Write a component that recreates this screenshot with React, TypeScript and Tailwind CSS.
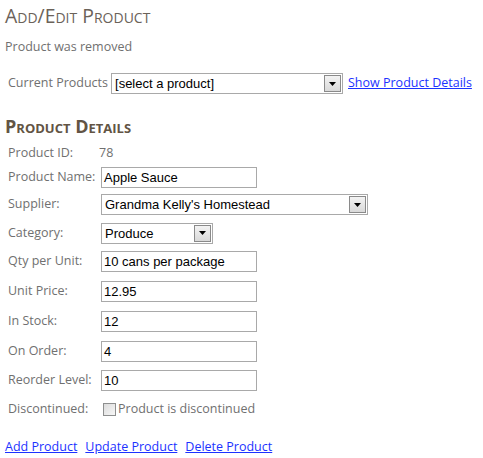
import React from 'react'

const label = 'text-[12.5px] text-[#707070] font-["Open_Sans",sans-serif]'
const field =
  'h-[21px] border border-[#a9a9a9] bg-white px-[2px] text-[13px] leading-[19px] text-[#000] font-["Liberation_Sans",Arial,sans-serif] flex items-center'

function DropArrow() {
  return (
    <div className="ml-auto flex h-[17px] w-[17px] items-center justify-center border border-[#8a8a8a] bg-gradient-to-b from-[#f3f3f3] to-[#d9d9d9]">
      <svg width="7" height="4" viewBox="0 0 7 4">
        <path d="M0 0h7L3.5 4z" fill="#000" />
      </svg>
    </div>
  )
}

function FakeSelect({ value, width }: { value: string; width: string }) {
  return (
    <div className={`${field} ${width} pr-[1px]`}>
      <span className="pl-[1px]">{value}</span>
      <DropArrow />
    </div>
  )
}

function Row({
  name,
  h,
  children,
}: {
  name: string
  h: string
  children: React.ReactNode
}) {
  return (
    <div className={`flex items-center ${h}`}>
      <span className={`${label} w-[93px] shrink-0`}>{name}</span>
      {children}
    </div>
  )
}

export default function App() {
  return (
    <div className="min-h-[458px] w-[483px] bg-white pl-[5px] pt-[1px]">
      <h1 className="h-[30px] text-[19.4px] leading-[30px] text-[#6b6259] font-['Open_Sans',sans-serif] [font-variant:small-caps]">
        Add/Edit Product
      </h1>
      <p className={`${label} mt-[7px] leading-[18px] text-[#5f5f5f]`}>
        Product was removed
      </p>
      <div className="mt-[17px] flex items-center pl-[3px]">
        <span className={`${label} mr-[3px] text-[#666]`}>Current Products</span>
        <FakeSelect value="[select a product]" width="w-[232px]" />
        <a
          href="#"
          className="ml-[5px] text-[12.5px] text-[#1c32ff] underline font-['Open_Sans',sans-serif]"
        >
          Show Product Details
        </a>
      </div>
      <h2 className="mt-[19px] h-[26px] text-[18px] font-bold leading-[26px] text-[#625444] font-['Open_Sans',sans-serif] [font-variant:small-caps]">
        Product Details
      </h2>
      <div className="mt-[3px] flex flex-col pl-[3px]">
        <Row name="Product ID:" h="h-[22px]">
          <span className="-ml-[2px] text-[12.5px] text-[#707070] font-['Open_Sans',sans-serif]">
            78
          </span>
        </Row>
        <Row name="Product Name:" h="h-[26px]">
          <div className={`${field} w-[156px]`}>Apple Sauce</div>
        </Row>
        <Row name="Supplier:" h="h-[29px]">
          <FakeSelect value="Grandma Kelly's Homestead" width="w-[267px]" />
        </Row>
        <Row name="Category:" h="h-[28px]">
          <FakeSelect value="Produce" width="w-[112px]" />
        </Row>
        <Row name="Qty per Unit:" h="h-[29px]">
          <div className={`${field} w-[156px]`}>10 cans per package</div>
        </Row>
        <Row name="Unit Price:" h="h-[30px]">
          <div className={`${field} w-[156px]`}>12.95</div>
        </Row>
        <Row name="In Stock:" h="h-[30px]">
          <div className={`${field} w-[156px]`}>12</div>
        </Row>
        <Row name="On Order:" h="h-[30px]">
          <div className={`${field} w-[156px]`}>4</div>
        </Row>
        <Row name="Reorder Level:" h="h-[29px]">
          <div className={`${field} w-[156px]`}>10</div>
        </Row>
        <Row name="Discontinued:" h="h-[28px]">
          <div className="ml-[2px] flex items-center">
            <span className="h-[13px] w-[13px] border border-[#8e8f8f] bg-gradient-to-br from-[#dcdcdc] to-[#f7f7f7]" />
            <span className={`${label} ml-[2px]`}>Product is discontinued</span>
          </div>
        </Row>
      </div>
      <div className="mt-[15px] flex gap-[8px] text-[12.5px] text-[#1c32ff] font-['Open_Sans',sans-serif]">
        <a href="#" className="underline">Add Product</a>
        <a href="#" className="underline">Update Product</a>
        <a href="#" className="underline">Delete Product</a>
      </div>
    </div>
  )
}
